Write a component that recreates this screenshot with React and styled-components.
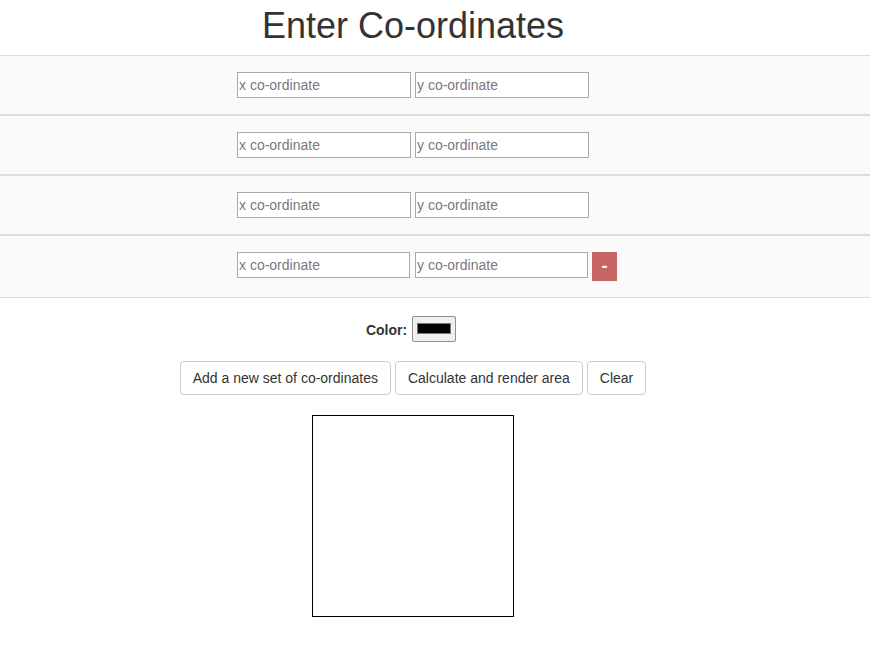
import React from "react";
import styled, { createGlobalStyle } from "styled-components";

const Global = createGlobalStyle`
  html, body { margin: 0; padding: 0; background: #fff; }
  body {
    font-family: "Liberation Sans", Arial, Helvetica, sans-serif;
    font-size: 14px;
    color: #333;
  }
`;

const Page = styled.div`
  display: flex;
  flex-direction: column;
`;

const Title = styled.h1`
  margin: 6px 44px 9px 0;
  font-size: 36px;
  font-weight: 400;
  line-height: 40px;
  text-align: center;
  color: #333;
`;

const Row = styled.div`
  display: grid;
  grid-template-columns: 1fr auto 1fr;
  align-items: start;
  padding: 16px 44px 16px 0;
  background: #fafafa;
  border-top: 1px solid #dcdcdc;
  border-bottom: 1px solid #dcdcdc;
`;

const Inputs = styled.div`
  grid-column: 2;
  display: flex;
  gap: ${(p) => (p.$last ? "5px" : "4px")};
  margin-right: ${(p) => (p.$last ? "1px" : "0")};
`;

const CoordInput = styled.input`
  box-sizing: border-box;
  width: ${(p) => (p.$narrow ? "173px" : "174px")};
  height: 26px;
  margin: 0;
  padding: 1px 2px 1px 1px;
  border: 1px solid #a9a9a9;
  background: #fff;
  font-family: "Liberation Sans", Arial, sans-serif;
  font-size: 14px;
  color: #333;
  &::placeholder { color: #7a7a7a; }
  &:focus { outline: none; }
`;

const Side = styled.div`
  grid-column: 3;
  display: flex;
  padding-left: 3px;
`;

const RemoveButton = styled.button`
  box-sizing: border-box;
  width: 25px;
  height: 29px;
  margin: 0;
  padding: 0 0 2px;
  border: none;
  background: #c76565;
  color: #fff;
  font-family: "Liberation Sans", Arial, sans-serif;
  font-size: 18px;
  font-weight: 700;
  line-height: 1;
  cursor: pointer;
`;

const ColorRow = styled.div`
  display: flex;
  justify-content: center;
  align-items: center;
  gap: 5px;
  padding: 18px 48px 0 0;
`;

const Label = styled.label`
  font-weight: 700;
  font-size: 14px;
  color: #333;
  padding-top: 1px;
`;

const ColorInput = styled.input`
  box-sizing: border-box;
  width: 44px;
  height: 26px;
  margin: 0;
  padding: 1px 2px;
  border: 1px solid #8f8f8f;
  border-radius: 2px;
  background: #efefef;
  cursor: pointer;
  &::-webkit-color-swatch-wrapper { padding: 5px 2px 6px; }
  &::-webkit-color-swatch { border: 1px solid #777; border-radius: 0; }
`;

const Actions = styled.div`
  display: flex;
  justify-content: center;
  gap: 4px;
  padding: 19px 44px 0 0;
`;

const Button = styled.button`
  box-sizing: border-box;
  height: 34px;
  margin: 0;
  padding: 6px 12px;
  border: 1px solid #ccc;
  border-radius: 4px;
  background: #fff;
  color: #333;
  font-family: "Liberation Sans", Arial, sans-serif;
  font-size: 14px;
  line-height: 20px;
  cursor: pointer;
`;

const CanvasWrap = styled.div`
  display: flex;
  justify-content: center;
  padding: 20px 44px 0 0;
`;

const Canvas = styled.canvas`
  display: block;
  width: 200px;
  height: 200px;
  border: 1px solid #000;
  background: #fff;
`;

const rows = [0, 1, 2, 3];

export default function App() {
  return (
    <Page>
      <Global />
      <Title>Enter Co-ordinates</Title>
      {rows.map((i) => {
        const last = i === rows.length - 1;
        return (
          <Row key={i}>
            <Inputs $last={last}>
              <CoordInput $narrow={last} placeholder="x co-ordinate" />
              <CoordInput $narrow={last} placeholder="y co-ordinate" />
            </Inputs>
            {last && (
              <Side>
                <RemoveButton>-</RemoveButton>
              </Side>
            )}
          </Row>
        );
      })}
      <ColorRow>
        <Label htmlFor="color">Color:</Label>
        <ColorInput id="color" type="color" defaultValue="#000000" />
      </ColorRow>
      <Actions>
        <Button>Add a new set of co-ordinates</Button>
        <Button>Calculate and render area</Button>
        <Button>Clear</Button>
      </Actions>
      <CanvasWrap>
        <Canvas width={200} height={200} />
      </CanvasWrap>
    </Page>
  );
}
